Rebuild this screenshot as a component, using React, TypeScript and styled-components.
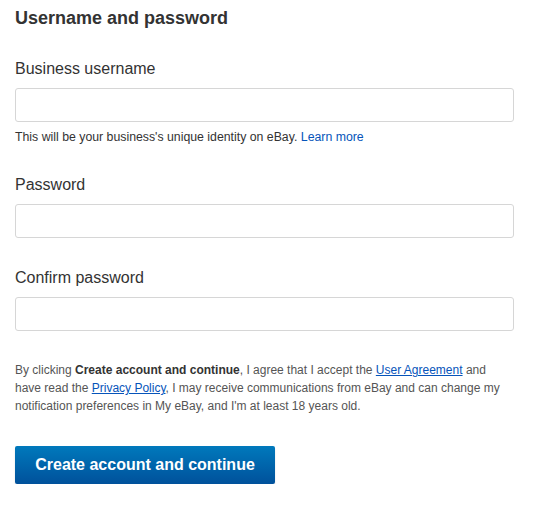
import React from "react";
import styled, { createGlobalStyle } from "styled-components";

const GlobalStyle = createGlobalStyle`
  body {
    margin: 0;
    background: #fff;
    font-family: "Liberation Sans", Arial, sans-serif;
    color: #333;
  }
`;

const Page = styled.div`
  padding: 7px 31px 0 15px;
`;

const Heading = styled.h2`
  margin: 0;
  font-size: 18px;
  line-height: 22px;
  font-weight: bold;
  color: #333;
`;

const Field = styled.div`
  margin-top: 30px;
`;

const Label = styled.label`
  display: block;
  font-size: 16px;
  line-height: 20px;
  color: #333;
  margin-bottom: 9px;
`;

const Input = styled.input`
  display: block;
  width: 100%;
  height: 34px;
  box-sizing: border-box;
  border: 1px solid #d6d6d6;
  border-radius: 3px;
  padding: 0 10px;
  font-size: 14px;
  font-family: inherit;
  outline: none;
`;

const Hint = styled.p`
  margin: 7px 0 0;
  font-size: 12.3px;
  line-height: 16px;
  color: #333;
`;

const Link = styled.a<{ $underline?: boolean }>`
  color: #0654ba;
  text-decoration: ${(p) => (p.$underline ? "underline" : "none")};
  cursor: pointer;
`;

const Legal = styled.p`
  margin: 30px 0 0;
  font-size: 12px;
  line-height: 18px;
  color: #555;
  max-width: 495px;

  b {
    color: #333;
  }
`;

const SubmitButton = styled.button`
  margin-top: 31px;
  width: 260px;
  height: 38px;
  border: none;
  border-radius: 2px;
  background: linear-gradient(to bottom, #0079bc, #00519b);
  box-shadow: 0 2px 2px rgba(0, 0, 0, 0.12);
  color: #fff;
  font-family: inherit;
  font-size: 16px;
  font-weight: bold;
  cursor: pointer;
`;

export default function App() {
  return (
    <>
      <GlobalStyle />
      <Page>
        <Heading>Username and password</Heading>
        <Field>
          <Label>Business username</Label>
          <Input type="text" />
          <Hint>
            This will be your business's unique identity on eBay.{" "}
            <Link>Learn more</Link>
          </Hint>
        </Field>
        <Field>
          <Label>Password</Label>
          <Input type="password" />
        </Field>
        <Field>
          <Label>Confirm password</Label>
          <Input type="password" />
        </Field>
        <Legal>
          By clicking <b>Create account and continue</b>, I agree that I accept
          the <Link $underline>User Agreement</Link> and have read the{" "}
          <Link $underline>Privacy Policy</Link>, I may receive communications
          from eBay and can change my notification preferences in My eBay, and
          I'm at least 18 years old.
        </Legal>
        <SubmitButton type="submit">Create account and continue</SubmitButton>
      </Page>
    </>
  );
}
